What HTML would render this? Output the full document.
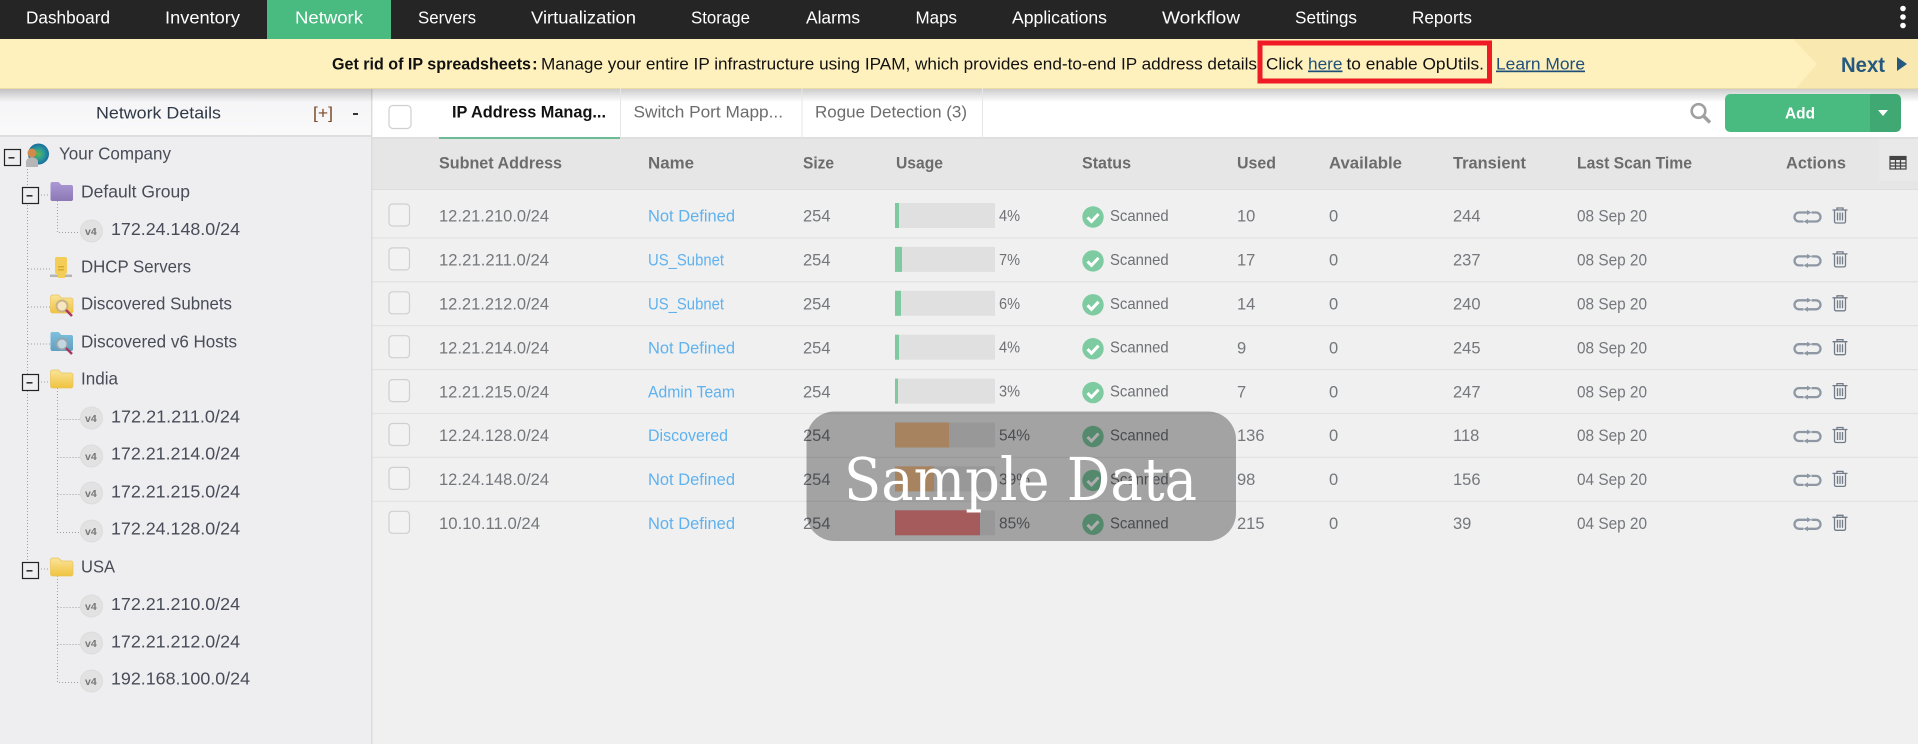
<!DOCTYPE html>
<html lang="en"><head><meta charset="utf-8"><title>IP Address Management</title>
<style>
html,body{margin:0;padding:0;background:#f0f0f0;overflow:hidden}
svg{display:block}
text{font-family:"Liberation Sans",Arial,sans-serif;white-space:pre}
.nav{font-size:17.5px;fill:#fff}
.ban{font-size:17px;fill:#111}
.tree{font-size:17.8px;fill:#484c58}
.th{font-size:17px;font-weight:bold;fill:#6c6c6c}
.td{font-size:16.5px;fill:#74777c}
.st{font-size:16px;fill:#6e7075}
.lnk{font-size:16.5px;fill:#5fb2ee}
.tab{font-size:17px;fill:#6c6c6c}
.v4{font-size:10.5px;font-weight:bold;fill:#777}
</style></head><body>
<svg xmlns="http://www.w3.org/2000/svg" width="1918" height="744" viewBox="0 0 1918 744">
<defs>
<linearGradient id="fy" x1="0" y1="0" x2="0" y2="1"><stop offset="0" stop-color="#fae49a"/><stop offset="1" stop-color="#f0c33e"/></linearGradient>
<linearGradient id="fp" x1="0" y1="0" x2="0" y2="1"><stop offset="0" stop-color="#ab98d4"/><stop offset="1" stop-color="#8c78b4"/></linearGradient>
<linearGradient id="fb" x1="0" y1="0" x2="0" y2="1"><stop offset="0" stop-color="#7fc0dd"/><stop offset="1" stop-color="#5f9fc0"/></linearGradient>
<linearGradient id="hd" x1="0" y1="0" x2="0" y2="1"><stop offset="0" stop-color="#f3f3f5"/><stop offset="1" stop-color="#fafafb"/></linearGradient>
<linearGradient id="sh" x1="0" y1="0" x2="0" y2="1"><stop offset="0" stop-color="#000" stop-opacity=".2"/><stop offset="1" stop-color="#000" stop-opacity="0"/></linearGradient>
<radialGradient id="gl" cx=".5" cy=".5" r=".6"><stop offset="0" stop-color="#58b84f"/><stop offset=".45" stop-color="#2a9a9a"/><stop offset="1" stop-color="#14589e"/></radialGradient>
<symbol id="box" width="18" height="18" overflow="visible"><rect x=".5" y=".5" width="16" height="16" fill="#eeeef0" stroke="#222" stroke-width="1.2"/><rect x="4.5" y="8" width="6" height="1.6" fill="#333"/></symbol>
<symbol id="ip" width="24" height="24" overflow="visible"><circle cx="11.5" cy="11" r="11" fill="#e2e2e3" stroke="#dcdcdc"/></symbol>
<symbol id="fold" width="24" height="20" overflow="visible"><path d="M.5 3a2 2 0 0 1 2-2h6l3 3h9.5a2 2 0 0 1 2 2v11a2 2 0 0 1-2 2H2.5a2 2 0 0 1-2-2z" fill="url(#fy)" stroke="#e8c35a" stroke-width=".7"/></symbol>
<symbol id="chk" width="22" height="22" overflow="visible"><circle cx="11" cy="11" r="10.7" fill="#7ecba1"/><path d="M5.5 11.500l4 4 7-7.500" fill="none" stroke="#fff" stroke-width="3"/></symbol>
<symbol id="rep" width="30" height="15" overflow="visible"><path d="M14 2.500H6a4.500 4.500 0 0 0 0 9h4.500M18.500 2.500H23a4.500 4.500 0 0 1 0 9H15" fill="none" stroke="#8e98a4" stroke-width="2.300"/><path d="M14 0l4.500 2.500L14 5zM15 9l-4.500 2.500L15 14z" fill="#8e98a4"/></symbol>
<symbol id="tr" width="16" height="17" overflow="visible"><path d="M.5 3h15M5 3V1h6v2M2.500 3v11.500a1.500 1.500 0 0 0 1.500 1.500h8a1.500 1.500 0 0 0 1.500-1.500V3" fill="none" stroke="#727c88" stroke-width="1.300"/><path d="M5.500 5.500v8M8 5.500v8M10.500 5.500v8" stroke="#727c88" stroke-width="1.300"/></symbol>
<symbol id="cb" width="22" height="24" overflow="visible"><rect x=".5" y=".5" width="20.500" height="22" rx="3.500" fill="#f2f2f2" stroke="#cfcfcf" stroke-width="1.200"/></symbol>
</defs>

<rect width="1918" height="744" fill="#f0f0f0"/>

<!-- left panel -->
<rect x="0" y="88" width="371" height="656" fill="#eeeef0"/>
<rect x="0" y="88" width="371" height="48" fill="url(#hd)"/>
<rect x="0" y="135" width="371" height="2" fill="#dedede"/>
<rect x="371" y="88" width="1.500" height="656" fill="#dcdcdc"/>

<!-- main top -->
<rect x="372.500" y="88" width="1545.500" height="50" fill="#fff"/>
<rect x="372.500" y="137" width="1545.500" height="2" fill="#dfdfdf"/>
<rect x="0" y="89" width="1918" height="13" fill="url(#sh)"/>

<!-- nav -->
<rect width="1918" height="39" fill="#252525"/>
<rect x="267" y="0" width="124" height="39" fill="#4abb80"/>
<text class="nav" x="26" y="23.500" textLength="84" lengthAdjust="spacingAndGlyphs">Dashboard</text>
<text class="nav" x="165" y="23.500" textLength="75" lengthAdjust="spacingAndGlyphs">Inventory</text>
<text class="nav" x="295" y="23.500" textLength="68" lengthAdjust="spacingAndGlyphs">Network</text>
<text class="nav" x="418" y="23.500" textLength="58" lengthAdjust="spacingAndGlyphs">Servers</text>
<text class="nav" x="531" y="23.500" textLength="105" lengthAdjust="spacingAndGlyphs">Virtualization</text>
<text class="nav" x="691" y="23.500" textLength="59" lengthAdjust="spacingAndGlyphs">Storage</text>
<text class="nav" x="806" y="23.500" textLength="54" lengthAdjust="spacingAndGlyphs">Alarms</text>
<text class="nav" x="915.500" y="23.500" textLength="41.500" lengthAdjust="spacingAndGlyphs">Maps</text>
<text class="nav" x="1012" y="23.500" textLength="95" lengthAdjust="spacingAndGlyphs">Applications</text>
<text class="nav" x="1162" y="23.500" textLength="78" lengthAdjust="spacingAndGlyphs">Workflow</text>
<text class="nav" x="1295" y="23.500" textLength="62" lengthAdjust="spacingAndGlyphs">Settings</text>
<text class="nav" x="1412" y="23.500" textLength="60" lengthAdjust="spacingAndGlyphs">Reports</text>
<circle cx="1903" cy="8.500" r="2.800" fill="#fff"/><circle cx="1903" cy="17" r="2.800" fill="#fff"/><circle cx="1903" cy="25.500" r="2.800" fill="#fff"/>

<!-- banner -->
<rect y="39" width="1918" height="50" fill="#fef1bd"/>
<rect y="88" width="1918" height="1" fill="#ecdba2"/>
<polygon points="1793,39 1918,39 1918,88 1796,88 1817,64" fill="#f9e9b0"/>
<text class="ban" x="332" y="69.500" textLength="199" lengthAdjust="spacingAndGlyphs" style="font-weight:bold">Get rid of IP spreadsheets</text>
<text class="ban" x="532" y="69.500" style="font-weight:bold">:</text>
<text class="ban" x="541" y="69.500" textLength="716" lengthAdjust="spacingAndGlyphs">Manage your entire IP infrastructure using IPAM, which provides end-to-end IP address details</text>
<text class="ban" x="1266" y="69.500" textLength="37" lengthAdjust="spacingAndGlyphs">Click</text>
<text class="ban" x="1308" y="69.500" textLength="34.500" lengthAdjust="spacingAndGlyphs" style="fill:#1f4e79" text-decoration="underline">here</text>
<text class="ban" x="1346.500" y="69.500" textLength="137.500" lengthAdjust="spacingAndGlyphs">to enable OpUtils.</text>
<text class="ban" x="1496" y="69.500" textLength="89" lengthAdjust="spacingAndGlyphs" style="fill:#1f4e79" text-decoration="underline">Learn More</text>
<rect x="1260" y="43" width="229.500" height="38" fill="none" stroke="#ef1c25" stroke-width="5"/>
<text x="1841" y="72" font-size="21" font-weight="bold" fill="#25587f" textLength="44" lengthAdjust="spacingAndGlyphs">Next</text>
<polygon points="1897,57 1907,64 1897,71" fill="#25587f"/>

<!-- panel header -->
<text class="ban" x="96" y="118.500" textLength="125" lengthAdjust="spacingAndGlyphs" style="fill:#2f3845">Network Details</text>
<text class="ban" x="313" y="118.500" textLength="20" lengthAdjust="spacingAndGlyphs" style="fill:#7a4a28">[+]</text>
<rect x="353" y="113" width="5" height="2" fill="#333"/>

<!-- tree lines -->
<g fill="none" stroke="#a0a0a0" stroke-width="1" stroke-dasharray="1 2">
<path d="M27.500 166V562M38 195H50M57.500 201V232.500H80M28 269H50M28 307H50M28 344H50M38 382H50M57.500 388V532.500H80M57.500 419.500H80M57.500 457.500H80M57.500 494.500H80M38 569H50M57.500 576V682.500H80M57.500 607.500H80M57.500 644.500H80"/>
</g>

<!-- tree -->
<use href="#box" x="4" y="149"/>
<circle cx="38.500" cy="154" r="10.500" fill="url(#gl)"/>
<circle cx="32" cy="153" r="4.500" fill="#d08a4a"/>
<path d="M26 167v-5a5 4 0 0 1 12 0v5z" fill="#b5b5b5"/>
<text class="tree" x="59" y="159.500" textLength="112" lengthAdjust="spacingAndGlyphs">Your Company</text>

<use href="#box" x="22" y="187"/>
<path d="M50.500 184a2 2 0 0 1 2-2h6l3 3h9.500a2 2 0 0 1 2 2v12a2 2 0 0 1-2 2h-18.500a2 2 0 0 1-2-2z" fill="url(#fp)"/>
<text class="tree" x="81" y="197.300" textLength="109" lengthAdjust="spacingAndGlyphs">Default Group</text>

<use href="#ip" x="80" y="220"/><text class="v4" x="85" y="235">v4</text>
<text class="tree" x="111" y="235" textLength="129" lengthAdjust="spacingAndGlyphs">172.24.148.0/24</text>

<rect x="50" y="274.500" width="22" height="2.500" fill="#b5b5b5"/>
<rect x="55" y="257" width="12" height="17" rx="2" fill="#f3cd55"/>
<rect x="58" y="266" width="6" height="1.500" fill="#d9a92f"/><rect x="58" y="269" width="6" height="1.500" fill="#d9a92f"/>
<rect x="58" y="273" width="7" height="5" fill="#f3cd55"/>
<text class="tree" x="81" y="272.300" textLength="110" lengthAdjust="spacingAndGlyphs">DHCP Servers</text>

<use href="#fold" x="50" y="294"/>
<circle cx="62" cy="306" r="5.500" fill="#f6e7c0" stroke="#c9b384" stroke-width="2"/>
<path d="M66 310l6 6" stroke="#a8385a" stroke-width="2.500"/>
<text class="tree" x="81" y="309.700" textLength="151" lengthAdjust="spacingAndGlyphs">Discovered Subnets</text>

<path d="M50.500 334a2 2 0 0 1 2-2h6l3 3h9.500a2 2 0 0 1 2 2v12a2 2 0 0 1-2 2h-18.500a2 2 0 0 1-2-2z" fill="url(#fb)"/>
<circle cx="62" cy="344" r="5.500" fill="#c3d6df" stroke="#8fa5b0" stroke-width="2"/>
<path d="M66 348l6 6" stroke="#a8385a" stroke-width="2.500"/>
<text class="tree" x="81" y="347.500" textLength="156" lengthAdjust="spacingAndGlyphs">Discovered v6 Hosts</text>

<use href="#box" x="22" y="374"/>
<use href="#fold" x="50" y="369"/>
<text class="tree" x="81" y="384.300" textLength="37" lengthAdjust="spacingAndGlyphs">India</text>

<use href="#ip" x="80" y="407"/><text class="v4" x="85" y="422">v4</text>
<text class="tree" x="111" y="422.500" textLength="129" lengthAdjust="spacingAndGlyphs">172.21.211.0/24</text>
<use href="#ip" x="80" y="445"/><text class="v4" x="85" y="460">v4</text>
<text class="tree" x="111" y="459.500" textLength="129" lengthAdjust="spacingAndGlyphs">172.21.214.0/24</text>
<use href="#ip" x="80" y="482"/><text class="v4" x="85" y="497">v4</text>
<text class="tree" x="111" y="497.500" textLength="129" lengthAdjust="spacingAndGlyphs">172.21.215.0/24</text>
<use href="#ip" x="80" y="520"/><text class="v4" x="85" y="535">v4</text>
<text class="tree" x="111" y="534.300" textLength="129" lengthAdjust="spacingAndGlyphs">172.24.128.0/24</text>

<use href="#box" x="22" y="562"/>
<use href="#fold" x="50" y="557"/>
<text class="tree" x="81" y="572.500" textLength="34" lengthAdjust="spacingAndGlyphs">USA</text>

<use href="#ip" x="80" y="595"/><text class="v4" x="85" y="610">v4</text>
<text class="tree" x="111" y="610" textLength="129" lengthAdjust="spacingAndGlyphs">172.21.210.0/24</text>
<use href="#ip" x="80" y="632"/><text class="v4" x="85" y="647">v4</text>
<text class="tree" x="111" y="647.500" textLength="129" lengthAdjust="spacingAndGlyphs">172.21.212.0/24</text>
<use href="#ip" x="80" y="670"/><text class="v4" x="85" y="685">v4</text>
<text class="tree" x="111" y="684.500" textLength="139" lengthAdjust="spacingAndGlyphs">192.168.100.0/24</text>

<!-- tabs -->
<rect x="389" y="105.500" width="22" height="23" rx="4" fill="#fff" stroke="#cfcfcf" stroke-width="1.200"/>
<rect x="439" y="137" width="181" height="2" fill="#6bbb94"/>
<rect x="620" y="88" width="1" height="50" fill="#e6e6e6"/>
<rect x="801.500" y="88" width="1" height="50" fill="#e6e6e6"/>
<rect x="982" y="88" width="1" height="50" fill="#e6e6e6"/>
<text class="tab" x="452" y="117.300" textLength="154" lengthAdjust="spacingAndGlyphs" style="font-weight:bold;fill:#111">IP Address Manag...</text>
<text class="tab" x="633.500" y="117.300" textLength="149.500" lengthAdjust="spacingAndGlyphs">Switch Port Mapp...</text>
<text class="tab" x="815" y="117.300" textLength="152" lengthAdjust="spacingAndGlyphs">Rogue Detection (3)</text>

<circle cx="1698.500" cy="111" r="6.800" fill="none" stroke="#a0a0a0" stroke-width="2.600"/>
<path d="M1703.500 116l6.500 6.500" stroke="#a0a0a0" stroke-width="3.400"/>

<path d="M1730 94h140v38h-140a5 5 0 0 1-5-5v-28a5 5 0 0 1 5-5z" fill="#4abb80"/>
<path d="M1870 94h26a5 5 0 0 1 5 5v28a5 5 0 0 1-5 5h-26z" fill="#40a973"/>
<text x="1785" y="118.500" font-size="15.500" font-weight="bold" fill="#fff" textLength="30" lengthAdjust="spacingAndGlyphs">Add</text>
<polygon points="1878,110 1888,110 1883,116" fill="#fff"/>

<!-- table header -->
<rect x="372.500" y="139" width="1545.500" height="50" fill="#e6e6e6"/>
<rect x="372.500" y="189" width="1545.500" height="1" fill="#dedede"/>
<rect x="1879" y="139" width="39" height="42" fill="#e9e9e9"/>
<text class="th" x="439" y="168.700" textLength="123" lengthAdjust="spacingAndGlyphs">Subnet Address</text>
<text class="th" x="648" y="168.700" textLength="46" lengthAdjust="spacingAndGlyphs">Name</text>
<text class="th" x="803" y="168.700" textLength="31" lengthAdjust="spacingAndGlyphs">Size</text>
<text class="th" x="896" y="168.700" textLength="47" lengthAdjust="spacingAndGlyphs">Usage</text>
<text class="th" x="1082" y="168.700" textLength="49" lengthAdjust="spacingAndGlyphs">Status</text>
<text class="th" x="1237" y="168.700" textLength="39" lengthAdjust="spacingAndGlyphs">Used</text>
<text class="th" x="1329" y="168.700" textLength="73" lengthAdjust="spacingAndGlyphs">Available</text>
<text class="th" x="1453" y="168.700" textLength="73" lengthAdjust="spacingAndGlyphs">Transient</text>
<text class="th" x="1577" y="168.700" textLength="115" lengthAdjust="spacingAndGlyphs">Last Scan Time</text>
<text class="th" x="1786" y="168.700" textLength="60" lengthAdjust="spacingAndGlyphs">Actions</text>
<g fill="none" stroke="#444" stroke-width="1.200"><rect x="1890" y="156.500" width="16" height="12.500"/><path d="M1890 163h16M1890 166h16M1895.500 160v9M1900.500 160v9"/></g>
<rect x="1889.500" y="156" width="17" height="4" fill="#444"/>

<!-- rows -->
<g fill="#e2e2e2"><rect x="372.500" y="237.300" width="1545.500" height="1.200"/><rect x="372.500" y="281.200" width="1545.500" height="1.200"/><rect x="372.500" y="325.100" width="1545.500" height="1.200"/><rect x="372.500" y="369" width="1545.500" height="1.200"/><rect x="372.500" y="412.900" width="1545.500" height="1.200"/><rect x="372.500" y="456.800" width="1545.500" height="1.200"/><rect x="372.500" y="500.700" width="1545.500" height="1.200"/></g>

<g>
<use href="#cb" x="388.500" y="203.500"/>
<text class="td" x="439" y="221.700" textLength="110" lengthAdjust="spacingAndGlyphs">12.21.210.0/24</text>
<text class="lnk" x="648" y="221.700" textLength="87" lengthAdjust="spacingAndGlyphs">Not Defined</text>
<text class="td" x="803" y="221.700">254</text>
<rect x="895" y="203" width="100" height="25" fill="#e0e0e0"/><rect x="895" y="203" width="4" height="25" fill="#7fc9a0"/>
<text class="st" x="999" y="221" textLength="21" lengthAdjust="spacingAndGlyphs">4%</text>
<use href="#chk" x="1082" y="206"/><text class="st" x="1110" y="221" textLength="58.600" lengthAdjust="spacingAndGlyphs">Scanned</text>
<text class="td" x="1237" y="221.700">10</text><text class="td" x="1329" y="221.700">0</text><text class="td" x="1453" y="221.700">244</text>
<text class="td" x="1577" y="221.700" textLength="70" lengthAdjust="spacingAndGlyphs">08 Sep 20</text>
<use href="#rep" x="1793" y="210"/><use href="#tr" x="1832" y="207"/>
</g>
<g transform="translate(0,43.900)">
<use href="#cb" x="388.500" y="203.500"/>
<text class="td" x="439" y="221.700" textLength="110" lengthAdjust="spacingAndGlyphs">12.21.211.0/24</text>
<text class="lnk" x="648" y="221.700" textLength="76" lengthAdjust="spacingAndGlyphs">US_Subnet</text>
<text class="td" x="803" y="221.700">254</text>
<rect x="895" y="203" width="100" height="25" fill="#e0e0e0"/><rect x="895" y="203" width="7" height="25" fill="#7fc9a0"/>
<text class="st" x="999" y="221" textLength="21" lengthAdjust="spacingAndGlyphs">7%</text>
<use href="#chk" x="1082" y="206"/><text class="st" x="1110" y="221" textLength="58.600" lengthAdjust="spacingAndGlyphs">Scanned</text>
<text class="td" x="1237" y="221.700">17</text><text class="td" x="1329" y="221.700">0</text><text class="td" x="1453" y="221.700">237</text>
<text class="td" x="1577" y="221.700" textLength="70" lengthAdjust="spacingAndGlyphs">08 Sep 20</text>
<use href="#rep" x="1793" y="210"/><use href="#tr" x="1832" y="207"/>
</g>
<g transform="translate(0,87.800)">
<use href="#cb" x="388.500" y="203.500"/>
<text class="td" x="439" y="221.700" textLength="110" lengthAdjust="spacingAndGlyphs">12.21.212.0/24</text>
<text class="lnk" x="648" y="221.700" textLength="76" lengthAdjust="spacingAndGlyphs">US_Subnet</text>
<text class="td" x="803" y="221.700">254</text>
<rect x="895" y="203" width="100" height="25" fill="#e0e0e0"/><rect x="895" y="203" width="6" height="25" fill="#7fc9a0"/>
<text class="st" x="999" y="221" textLength="21" lengthAdjust="spacingAndGlyphs">6%</text>
<use href="#chk" x="1082" y="206"/><text class="st" x="1110" y="221" textLength="58.600" lengthAdjust="spacingAndGlyphs">Scanned</text>
<text class="td" x="1237" y="221.700">14</text><text class="td" x="1329" y="221.700">0</text><text class="td" x="1453" y="221.700">240</text>
<text class="td" x="1577" y="221.700" textLength="70" lengthAdjust="spacingAndGlyphs">08 Sep 20</text>
<use href="#rep" x="1793" y="210"/><use href="#tr" x="1832" y="207"/>
</g>
<g transform="translate(0,131.700)">
<use href="#cb" x="388.500" y="203.500"/>
<text class="td" x="439" y="221.700" textLength="110" lengthAdjust="spacingAndGlyphs">12.21.214.0/24</text>
<text class="lnk" x="648" y="221.700" textLength="87" lengthAdjust="spacingAndGlyphs">Not Defined</text>
<text class="td" x="803" y="221.700">254</text>
<rect x="895" y="203" width="100" height="25" fill="#e0e0e0"/><rect x="895" y="203" width="4" height="25" fill="#7fc9a0"/>
<text class="st" x="999" y="221" textLength="21" lengthAdjust="spacingAndGlyphs">4%</text>
<use href="#chk" x="1082" y="206"/><text class="st" x="1110" y="221" textLength="58.600" lengthAdjust="spacingAndGlyphs">Scanned</text>
<text class="td" x="1237" y="221.700">9</text><text class="td" x="1329" y="221.700">0</text><text class="td" x="1453" y="221.700">245</text>
<text class="td" x="1577" y="221.700" textLength="70" lengthAdjust="spacingAndGlyphs">08 Sep 20</text>
<use href="#rep" x="1793" y="210"/><use href="#tr" x="1832" y="207"/>
</g>
<g transform="translate(0,175.600)">
<use href="#cb" x="388.500" y="203.500"/>
<text class="td" x="439" y="221.700" textLength="110" lengthAdjust="spacingAndGlyphs">12.21.215.0/24</text>
<text class="lnk" x="648" y="221.700" textLength="87" lengthAdjust="spacingAndGlyphs">Admin Team</text>
<text class="td" x="803" y="221.700">254</text>
<rect x="895" y="203" width="100" height="25" fill="#e0e0e0"/><rect x="895" y="203" width="3" height="25" fill="#7fc9a0"/>
<text class="st" x="999" y="221" textLength="21" lengthAdjust="spacingAndGlyphs">3%</text>
<use href="#chk" x="1082" y="206"/><text class="st" x="1110" y="221" textLength="58.600" lengthAdjust="spacingAndGlyphs">Scanned</text>
<text class="td" x="1237" y="221.700">7</text><text class="td" x="1329" y="221.700">0</text><text class="td" x="1453" y="221.700">247</text>
<text class="td" x="1577" y="221.700" textLength="70" lengthAdjust="spacingAndGlyphs">08 Sep 20</text>
<use href="#rep" x="1793" y="210"/><use href="#tr" x="1832" y="207"/>
</g>
<g transform="translate(0,219.500)">
<use href="#cb" x="388.500" y="203.500"/>
<text class="td" x="439" y="221.700" textLength="110" lengthAdjust="spacingAndGlyphs">12.24.128.0/24</text>
<text class="lnk" x="648" y="221.700" textLength="80" lengthAdjust="spacingAndGlyphs">Discovered</text>
<text class="td" x="803" y="221.700">254</text>
<rect x="895" y="203" width="100" height="25" fill="#e0e0e0"/><rect x="895" y="203" width="54" height="25" fill="#f7c28d"/>
<text class="st" x="999" y="221" textLength="31" lengthAdjust="spacingAndGlyphs">54%</text>
<use href="#chk" x="1082" y="206"/><text class="st" x="1110" y="221" textLength="58.600" lengthAdjust="spacingAndGlyphs">Scanned</text>
<text class="td" x="1237" y="221.700">136</text><text class="td" x="1329" y="221.700">0</text><text class="td" x="1453" y="221.700">118</text>
<text class="td" x="1577" y="221.700" textLength="70" lengthAdjust="spacingAndGlyphs">08 Sep 20</text>
<use href="#rep" x="1793" y="210"/><use href="#tr" x="1832" y="207"/>
</g>
<g transform="translate(0,263.400)">
<use href="#cb" x="388.500" y="203.500"/>
<text class="td" x="439" y="221.700" textLength="110" lengthAdjust="spacingAndGlyphs">12.24.148.0/24</text>
<text class="lnk" x="648" y="221.700" textLength="87" lengthAdjust="spacingAndGlyphs">Not Defined</text>
<text class="td" x="803" y="221.700">254</text>
<rect x="895" y="203" width="100" height="25" fill="#e0e0e0"/><rect x="895" y="203" width="39" height="25" fill="#f7c28d"/>
<text class="st" x="999" y="221" textLength="31" lengthAdjust="spacingAndGlyphs">39%</text>
<use href="#chk" x="1082" y="206"/><text class="st" x="1110" y="221" textLength="58.600" lengthAdjust="spacingAndGlyphs">Scanned</text>
<text class="td" x="1237" y="221.700">98</text><text class="td" x="1329" y="221.700">0</text><text class="td" x="1453" y="221.700">156</text>
<text class="td" x="1577" y="221.700" textLength="70" lengthAdjust="spacingAndGlyphs">04 Sep 20</text>
<use href="#rep" x="1793" y="210"/><use href="#tr" x="1832" y="207"/>
</g>
<g transform="translate(0,307.300)">
<use href="#cb" x="388.500" y="203.500"/>
<text class="td" x="439" y="221.700" textLength="101" lengthAdjust="spacingAndGlyphs">10.10.11.0/24</text>
<text class="lnk" x="648" y="221.700" textLength="87" lengthAdjust="spacingAndGlyphs">Not Defined</text>
<text class="td" x="803" y="221.700">254</text>
<rect x="895" y="203" width="100" height="25" fill="#e0e0e0"/><rect x="895" y="203" width="85" height="25" fill="#f38686"/>
<text class="st" x="999" y="221" textLength="31" lengthAdjust="spacingAndGlyphs">85%</text>
<use href="#chk" x="1082" y="206"/><text class="st" x="1110" y="221" textLength="58.600" lengthAdjust="spacingAndGlyphs">Scanned</text>
<text class="td" x="1237" y="221.700">215</text><text class="td" x="1329" y="221.700">0</text><text class="td" x="1453" y="221.700">39</text>
<text class="td" x="1577" y="221.700" textLength="70" lengthAdjust="spacingAndGlyphs">04 Sep 20</text>
<use href="#rep" x="1793" y="210"/><use href="#tr" x="1832" y="207"/>
</g>

<!-- overlay -->
<rect x="806.500" y="411.500" width="429.500" height="129.500" rx="28" fill="#000" fill-opacity=".32"/>
<text x="844" y="500" fill="#fff" font-size="59" textLength="353" lengthAdjust="spacingAndGlyphs" style="font-family:'DejaVu Serif','Liberation Serif',serif">Sample Data</text>
</svg>
</body></html>
